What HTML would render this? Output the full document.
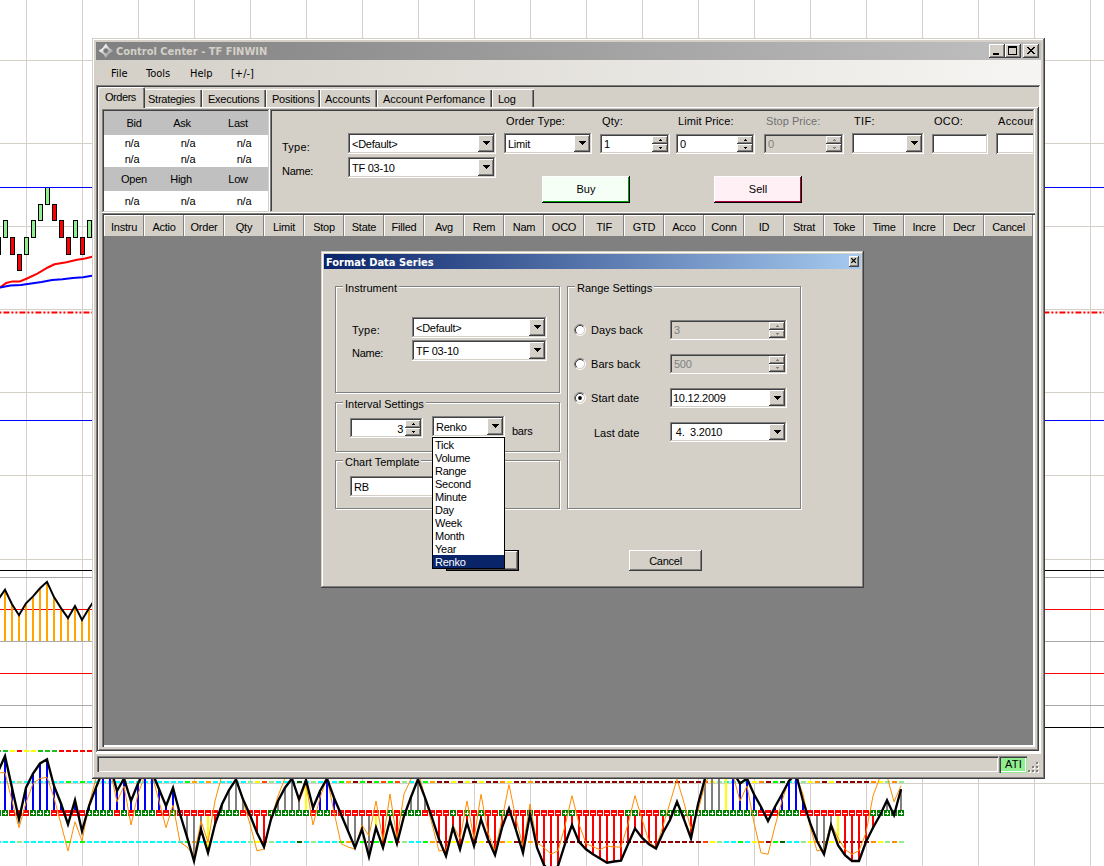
<!DOCTYPE html>
<html><head><meta charset="utf-8"><title>Control Center - TF FINWIN</title>
<style>
html,body{margin:0;padding:0}
body{width:1104px;height:866px;position:relative;overflow:hidden;background:#fff;font-family:"Liberation Sans",sans-serif;font-size:11px;color:#000}
div{position:absolute;box-sizing:border-box}
.t{white-space:nowrap;line-height:13px;height:13px;font-size:11px;letter-spacing:-0.25px}
.face{background:#d4d0c8}
.sunk{box-shadow:inset -1px -1px 0 #fff,inset 1px 1px 0 #808080,inset -2px -2px 0 #d4d0c8,inset 2px 2px 0 #404040}
.btn{background:#d4d0c8;box-shadow:inset -1px -1px 0 #404040,inset 1px 1px 0 #fff,inset -2px -2px 0 #808080,inset 2px 2px 0 #d4d0c8}
.win{background:#d4d0c8;box-shadow:inset -1px -1px 0 #404040,inset 1px 1px 0 #d4d0c8,inset -2px -2px 0 #808080,inset 2px 2px 0 #fff}
.arr{line-height:0}
.arr svg{display:block}
.hdr{letter-spacing:-0.25px;background:#d4d0c8;box-shadow:inset -1px -1px 0 #808080,inset 1px 1px 0 #fff;text-align:center;line-height:24px;font-size:11px;white-space:nowrap;overflow:hidden}
.menu{font-size:11px;line-height:15px;height:15px;white-space:nowrap;font-family:"DejaVu Sans Condensed","DejaVu Sans","Liberation Sans",sans-serif}
.tb{font-family:"DejaVu Sans Condensed","DejaVu Sans","Liberation Sans",sans-serif;font-weight:bold;letter-spacing:0}
.tab{background:#d4d0c8;white-space:nowrap;font-size:11px;line-height:13px}
.grp{border:1px solid #808080;box-shadow:1px 1px 0 #fff,inset 1px 1px 0 #fff}
.grp>.lg{background:#d4d0c8;padding:0 2px;line-height:13px;height:13px;white-space:nowrap;font-size:11px}
.radio{width:12px;height:12px;border-radius:50%;background:#fff;box-shadow:inset 1px 1px 0 #808080,inset -1px -1px 0 #fff}
</style></head><body>
<svg id="chart" width="1104" height="866" viewBox="0 0 1104 866" style="position:absolute;left:0;top:0">
<rect width="1104" height="866" fill="#fff"/>
<g shape-rendering="crispEdges">
<rect x="26" y="0" width="1" height="866" fill="#d4d0c8"/>
<rect x="82" y="0" width="1" height="866" fill="#d4d0c8"/>
<rect x="138" y="0" width="1" height="866" fill="#d4d0c8"/>
<rect x="194" y="0" width="1" height="866" fill="#d4d0c8"/>
<rect x="250" y="0" width="1" height="866" fill="#d4d0c8"/>
<rect x="306" y="0" width="1" height="866" fill="#d4d0c8"/>
<rect x="362" y="0" width="1" height="866" fill="#d4d0c8"/>
<rect x="418" y="0" width="1" height="866" fill="#d4d0c8"/>
<rect x="474" y="0" width="1" height="866" fill="#d4d0c8"/>
<rect x="530" y="0" width="1" height="866" fill="#d4d0c8"/>
<rect x="586" y="0" width="1" height="866" fill="#d4d0c8"/>
<rect x="642" y="0" width="1" height="866" fill="#d4d0c8"/>
<rect x="698" y="0" width="1" height="866" fill="#d4d0c8"/>
<rect x="754" y="0" width="1" height="866" fill="#d4d0c8"/>
<rect x="810" y="0" width="1" height="866" fill="#d4d0c8"/>
<rect x="866" y="0" width="1" height="866" fill="#d4d0c8"/>
<rect x="922" y="0" width="1" height="866" fill="#d4d0c8"/>
<rect x="978" y="0" width="1" height="866" fill="#d4d0c8"/>
<rect x="1034" y="0" width="1" height="866" fill="#d4d0c8"/>
<rect x="1090" y="0" width="1" height="866" fill="#d4d0c8"/>
<rect x="0" y="60" width="1104" height="1" fill="#d4d0c8"/>
<rect x="0" y="143" width="1104" height="1" fill="#d4d0c8"/>
<rect x="0" y="226" width="1104" height="1" fill="#d4d0c8"/>
<rect x="0" y="309" width="1104" height="1" fill="#d4d0c8"/>
<rect x="0" y="392" width="1104" height="1" fill="#d4d0c8"/>
<rect x="0" y="475" width="1104" height="1" fill="#d4d0c8"/>
<rect x="0" y="559" width="1104" height="1" fill="#d4d0c8"/>
<rect x="0" y="783" width="1104" height="1" fill="#d4d0c8"/>
<rect x="0" y="577" width="1104" height="1" fill="#a9a9a9"/>
<rect x="0" y="641" width="1104" height="1" fill="#a9a9a9"/>
<rect x="0" y="705" width="1104" height="1" fill="#a9a9a9"/>
<rect x="0" y="187" width="1104" height="1" fill="#0000ff"/>
<rect x="0" y="420" width="1104" height="1" fill="#0000ff"/>
<rect x="0" y="570" width="1104" height="1" fill="#000"/>
<rect x="0" y="727" width="1104" height="1" fill="#000"/>
<rect x="0" y="609" width="1104" height="1" fill="#ff0000"/>
<rect x="0" y="673" width="1104" height="1" fill="#ff0000"/>
</g><line x1="-12.6" y1="312.5" x2="1104" y2="312.5" stroke="#ff0000" stroke-width="2" stroke-dasharray="6 2 2 2 2 2"/><g shape-rendering="crispEdges">
</g>
<rect x="-3.5" y="237.5" width="4" height="17" fill="#ff0000" stroke="#000" stroke-width="1"/>
<rect x="3.5" y="220.5" width="4" height="17" fill="#90ee90" stroke="#000" stroke-width="1"/>
<rect x="10.5" y="237.5" width="4" height="17" fill="#ff0000" stroke="#000" stroke-width="1"/>
<rect x="17.5" y="254.5" width="4" height="16" fill="#ff0000" stroke="#000" stroke-width="1"/>
<rect x="24.5" y="237.5" width="4" height="17" fill="#90ee90" stroke="#000" stroke-width="1"/>
<rect x="31.5" y="220.5" width="4" height="17" fill="#90ee90" stroke="#000" stroke-width="1"/>
<rect x="38.5" y="204.5" width="4" height="16" fill="#90ee90" stroke="#000" stroke-width="1"/>
<rect x="45.5" y="187.5" width="4" height="17" fill="#90ee90" stroke="#000" stroke-width="1"/>
<rect x="52.5" y="204.5" width="4" height="16" fill="#ff0000" stroke="#000" stroke-width="1"/>
<rect x="59.5" y="220.5" width="4" height="17" fill="#ff0000" stroke="#000" stroke-width="1"/>
<rect x="66.5" y="237.5" width="4" height="17" fill="#ff0000" stroke="#000" stroke-width="1"/>
<rect x="73.5" y="220.5" width="4" height="17" fill="#90ee90" stroke="#000" stroke-width="1"/>
<rect x="80.5" y="237.5" width="4" height="17" fill="#ff0000" stroke="#000" stroke-width="1"/>
<rect x="87.5" y="220.5" width="4" height="17" fill="#90ee90" stroke="#000" stroke-width="1"/>
<rect x="0" y="187" width="1104" height="1" fill="#0000ff" shape-rendering="crispEdges"/>
<polyline fill="none" stroke="#ff0000" stroke-width="2" points="0,287.6 6.2,283 12.5,281.4 19.8,281.4 27,278.5 37.4,273.7 47.8,267.5 54.5,264.3 66.5,262.3 77,259.8 85.2,258.5 92,256.7 96,256"/>
<polyline fill="none" stroke="#0000ff" stroke-width="2" points="0,287.6 10.4,285.5 20.8,285 31.2,283.5 41.6,282 52,280 62.4,279.3 72.8,277.9 83,277.2 92,275.8 96,275.4"/>
<g shape-rendering="crispEdges">
<rect x="-3" y="600.0" width="2" height="41.0" fill="#ffa500"/>
<rect x="4" y="589.8" width="2" height="51.2" fill="#ffa500"/>
<rect x="11" y="604.3" width="2" height="36.7" fill="#ffa500"/>
<rect x="18" y="615.2" width="2" height="25.8" fill="#ffa500"/>
<rect x="25" y="603.3" width="2" height="37.7" fill="#ffa500"/>
<rect x="32" y="596.4" width="2" height="44.6" fill="#ffa500"/>
<rect x="39" y="588.3" width="2" height="52.7" fill="#ffa500"/>
<rect x="46" y="581.8" width="2" height="59.2" fill="#ffa500"/>
<rect x="53" y="597.1" width="2" height="43.9" fill="#ffa500"/>
<rect x="60" y="608.1" width="2" height="32.9" fill="#ffa500"/>
<rect x="67" y="618.1" width="2" height="22.9" fill="#ffa500"/>
<rect x="74" y="606.0" width="2" height="35.0" fill="#ffa500"/>
<rect x="81" y="619.9" width="2" height="21.1" fill="#ffa500"/>
<rect x="88" y="608.3" width="2" height="32.7" fill="#ffa500"/>
<rect x="95" y="598.0" width="2" height="43.0" fill="#ffa500"/>
</g>
<polyline fill="none" stroke="#000" stroke-width="2" stroke-linejoin="miter" stroke-miterlimit="12" points="-2,600 5,589.8 12,604.3 19,615.2 26,603.3 33,596.4 40,588.3 47,581.8 54,597.1 61,608.1 68,618.1 75,606 82,619.9 89,608.3 96,598"/>
<g shape-rendering="crispEdges">
<rect x="0" y="750" width="1" height="2" fill="#1ebe1e"/>
<rect x="3" y="750" width="5" height="2" fill="#1ebe1e"/>
<rect x="10" y="750" width="5" height="2" fill="#ffff00"/>
<rect x="17" y="750" width="5" height="2" fill="#ff0000"/>
<rect x="24" y="750" width="5" height="2" fill="#ffff00"/>
<rect x="31" y="750" width="5" height="2" fill="#ffff00"/>
<rect x="38" y="750" width="5" height="2" fill="#1ebe1e"/>
<rect x="45" y="750" width="5" height="2" fill="#1ebe1e"/>
<rect x="52" y="750" width="5" height="2" fill="#1ebe1e"/>
<rect x="59" y="750" width="5" height="2" fill="#ff0000"/>
<rect x="66" y="750" width="5" height="2" fill="#ff0000"/>
<rect x="73" y="750" width="5" height="2" fill="#ff0000"/>
<rect x="80" y="750" width="5" height="2" fill="#ff0000"/>
<rect x="87" y="750" width="5" height="2" fill="#ff0000"/>
<rect x="-4" y="781" width="5" height="2" fill="#00ffff"/>
<rect x="-4" y="841" width="5" height="2" fill="#00ffff"/>
<rect x="3" y="781" width="5" height="2" fill="#00ffff"/>
<rect x="3" y="841" width="5" height="2" fill="#00ffff"/>
<rect x="10" y="781" width="5" height="2" fill="#00ffff"/>
<rect x="10" y="841" width="5" height="2" fill="#00ffff"/>
<rect x="17" y="781" width="5" height="2" fill="#90ee90"/>
<rect x="17" y="841" width="5" height="2" fill="#90ee90"/>
<rect x="24" y="781" width="5" height="2" fill="#00ffff"/>
<rect x="24" y="841" width="5" height="2" fill="#00ffff"/>
<rect x="31" y="781" width="5" height="2" fill="#00ffff"/>
<rect x="31" y="841" width="5" height="2" fill="#00ffff"/>
<rect x="38" y="781" width="5" height="2" fill="#00ffff"/>
<rect x="38" y="841" width="5" height="2" fill="#00ffff"/>
<rect x="45" y="781" width="5" height="2" fill="#00ffff"/>
<rect x="45" y="841" width="5" height="2" fill="#00ffff"/>
<rect x="52" y="781" width="5" height="2" fill="#00ffff"/>
<rect x="52" y="841" width="5" height="2" fill="#00ffff"/>
<rect x="59" y="781" width="5" height="2" fill="#00ffff"/>
<rect x="59" y="841" width="5" height="2" fill="#00ffff"/>
<rect x="66" y="781" width="5" height="2" fill="#00ff00"/>
<rect x="66" y="841" width="5" height="2" fill="#00ff00"/>
<rect x="73" y="781" width="5" height="2" fill="#00ffff"/>
<rect x="73" y="841" width="5" height="2" fill="#00ffff"/>
<rect x="80" y="781" width="5" height="2" fill="#00ff00"/>
<rect x="80" y="841" width="5" height="2" fill="#00ff00"/>
<rect x="87" y="781" width="5" height="2" fill="#00ffff"/>
<rect x="87" y="841" width="5" height="2" fill="#00ffff"/>
<rect x="94" y="781" width="5" height="2" fill="#00ffff"/>
<rect x="94" y="841" width="5" height="2" fill="#00ffff"/>
<rect x="101" y="781" width="5" height="2" fill="#00ffff"/>
<rect x="101" y="841" width="5" height="2" fill="#00ffff"/>
<rect x="108" y="781" width="5" height="2" fill="#00ffff"/>
<rect x="108" y="841" width="5" height="2" fill="#00ffff"/>
<rect x="115" y="781" width="5" height="2" fill="#00ffff"/>
<rect x="115" y="841" width="5" height="2" fill="#00ffff"/>
<rect x="122" y="781" width="5" height="2" fill="#00ffff"/>
<rect x="122" y="841" width="5" height="2" fill="#00ffff"/>
<rect x="129" y="781" width="5" height="2" fill="#00ffff"/>
<rect x="129" y="841" width="5" height="2" fill="#00ffff"/>
<rect x="136" y="781" width="5" height="2" fill="#00ffff"/>
<rect x="136" y="841" width="5" height="2" fill="#00ffff"/>
<rect x="143" y="781" width="5" height="2" fill="#00ffff"/>
<rect x="143" y="841" width="5" height="2" fill="#00ffff"/>
<rect x="150" y="781" width="5" height="2" fill="#00ffff"/>
<rect x="150" y="841" width="5" height="2" fill="#00ffff"/>
<rect x="157" y="781" width="5" height="2" fill="#00ffff"/>
<rect x="157" y="841" width="5" height="2" fill="#00ffff"/>
<rect x="164" y="781" width="5" height="2" fill="#00ffff"/>
<rect x="164" y="841" width="5" height="2" fill="#00ffff"/>
<rect x="171" y="781" width="5" height="2" fill="#00ffff"/>
<rect x="171" y="841" width="5" height="2" fill="#00ffff"/>
<rect x="178" y="781" width="5" height="2" fill="#00ffff"/>
<rect x="178" y="841" width="5" height="2" fill="#00ffff"/>
<rect x="185" y="781" width="5" height="2" fill="#00ff00"/>
<rect x="185" y="841" width="5" height="2" fill="#00ff00"/>
<rect x="192" y="781" width="5" height="2" fill="#ffa500"/>
<rect x="192" y="841" width="5" height="2" fill="#ffa500"/>
<rect x="199" y="781" width="5" height="2" fill="#00ffff"/>
<rect x="199" y="841" width="5" height="2" fill="#00ffff"/>
<rect x="206" y="781" width="5" height="2" fill="#ffa500"/>
<rect x="206" y="841" width="5" height="2" fill="#ffa500"/>
<rect x="213" y="781" width="5" height="2" fill="#00ffff"/>
<rect x="213" y="841" width="5" height="2" fill="#00ffff"/>
<rect x="220" y="781" width="5" height="2" fill="#00ffff"/>
<rect x="220" y="841" width="5" height="2" fill="#00ffff"/>
<rect x="227" y="781" width="5" height="2" fill="#00ffff"/>
<rect x="227" y="841" width="5" height="2" fill="#00ffff"/>
<rect x="234" y="781" width="5" height="2" fill="#00ffff"/>
<rect x="234" y="841" width="5" height="2" fill="#00ffff"/>
<rect x="241" y="781" width="5" height="2" fill="#00ffff"/>
<rect x="241" y="841" width="5" height="2" fill="#00ffff"/>
<rect x="248" y="781" width="5" height="2" fill="#90ee90"/>
<rect x="248" y="841" width="5" height="2" fill="#90ee90"/>
<rect x="255" y="781" width="5" height="2" fill="#ffff00"/>
<rect x="255" y="841" width="5" height="2" fill="#ffff00"/>
<rect x="262" y="781" width="5" height="2" fill="#ff4500"/>
<rect x="262" y="841" width="5" height="2" fill="#ff4500"/>
<rect x="269" y="781" width="5" height="2" fill="#90ee90"/>
<rect x="269" y="841" width="5" height="2" fill="#90ee90"/>
<rect x="276" y="781" width="5" height="2" fill="#00ffff"/>
<rect x="276" y="841" width="5" height="2" fill="#00ffff"/>
<rect x="283" y="781" width="5" height="2" fill="#00ffff"/>
<rect x="283" y="841" width="5" height="2" fill="#00ffff"/>
<rect x="290" y="781" width="5" height="2" fill="#00ffff"/>
<rect x="290" y="841" width="5" height="2" fill="#00ffff"/>
<rect x="297" y="781" width="5" height="2" fill="#006400"/>
<rect x="297" y="841" width="5" height="2" fill="#006400"/>
<rect x="304" y="781" width="5" height="2" fill="#00ffff"/>
<rect x="304" y="841" width="5" height="2" fill="#00ffff"/>
<rect x="311" y="781" width="5" height="2" fill="#90ee90"/>
<rect x="311" y="841" width="5" height="2" fill="#90ee90"/>
<rect x="318" y="781" width="5" height="2" fill="#00ffff"/>
<rect x="318" y="841" width="5" height="2" fill="#00ffff"/>
<rect x="325" y="781" width="5" height="2" fill="#00ffff"/>
<rect x="325" y="841" width="5" height="2" fill="#00ffff"/>
<rect x="332" y="781" width="5" height="2" fill="#00ffff"/>
<rect x="332" y="841" width="5" height="2" fill="#00ffff"/>
<rect x="339" y="781" width="5" height="2" fill="#00ff00"/>
<rect x="339" y="841" width="5" height="2" fill="#00ff00"/>
<rect x="346" y="781" width="5" height="2" fill="#ffa500"/>
<rect x="346" y="841" width="5" height="2" fill="#ffa500"/>
<rect x="353" y="781" width="5" height="2" fill="#8b0000"/>
<rect x="353" y="841" width="5" height="2" fill="#8b0000"/>
<rect x="360" y="781" width="5" height="2" fill="#00ff00"/>
<rect x="360" y="841" width="5" height="2" fill="#00ff00"/>
<rect x="367" y="781" width="5" height="2" fill="#8b0000"/>
<rect x="367" y="841" width="5" height="2" fill="#8b0000"/>
<rect x="374" y="781" width="5" height="2" fill="#00ff00"/>
<rect x="374" y="841" width="5" height="2" fill="#00ff00"/>
<rect x="381" y="781" width="5" height="2" fill="#ff4500"/>
<rect x="381" y="841" width="5" height="2" fill="#ff4500"/>
<rect x="388" y="781" width="5" height="2" fill="#00ff00"/>
<rect x="388" y="841" width="5" height="2" fill="#00ff00"/>
<rect x="395" y="781" width="5" height="2" fill="#ff4500"/>
<rect x="395" y="841" width="5" height="2" fill="#ff4500"/>
<rect x="402" y="781" width="5" height="2" fill="#90ee90"/>
<rect x="402" y="841" width="5" height="2" fill="#90ee90"/>
<rect x="409" y="781" width="5" height="2" fill="#00ffff"/>
<rect x="409" y="841" width="5" height="2" fill="#00ffff"/>
<rect x="416" y="781" width="5" height="2" fill="#00ffff"/>
<rect x="416" y="841" width="5" height="2" fill="#00ffff"/>
<rect x="423" y="781" width="5" height="2" fill="#00ff00"/>
<rect x="423" y="841" width="5" height="2" fill="#00ff00"/>
<rect x="430" y="781" width="5" height="2" fill="#ffa500"/>
<rect x="430" y="841" width="5" height="2" fill="#ffa500"/>
<rect x="437" y="781" width="5" height="2" fill="#8b0000"/>
<rect x="437" y="841" width="5" height="2" fill="#8b0000"/>
<rect x="444" y="781" width="5" height="2" fill="#8b0000"/>
<rect x="444" y="841" width="5" height="2" fill="#8b0000"/>
<rect x="451" y="781" width="5" height="2" fill="#ffff00"/>
<rect x="451" y="841" width="5" height="2" fill="#ffff00"/>
<rect x="458" y="781" width="5" height="2" fill="#8b0000"/>
<rect x="458" y="841" width="5" height="2" fill="#8b0000"/>
<rect x="465" y="781" width="5" height="2" fill="#ffff00"/>
<rect x="465" y="841" width="5" height="2" fill="#ffff00"/>
<rect x="472" y="781" width="5" height="2" fill="#8b0000"/>
<rect x="472" y="841" width="5" height="2" fill="#8b0000"/>
<rect x="479" y="781" width="5" height="2" fill="#ffff00"/>
<rect x="479" y="841" width="5" height="2" fill="#ffff00"/>
<rect x="486" y="781" width="5" height="2" fill="#8b0000"/>
<rect x="486" y="841" width="5" height="2" fill="#8b0000"/>
<rect x="493" y="781" width="5" height="2" fill="#8b0000"/>
<rect x="493" y="841" width="5" height="2" fill="#8b0000"/>
<rect x="500" y="781" width="5" height="2" fill="#ff8c00"/>
<rect x="500" y="841" width="5" height="2" fill="#ff8c00"/>
<rect x="507" y="781" width="5" height="2" fill="#ffff00"/>
<rect x="507" y="841" width="5" height="2" fill="#ffff00"/>
<rect x="514" y="781" width="5" height="2" fill="#8b0000"/>
<rect x="514" y="841" width="5" height="2" fill="#8b0000"/>
<rect x="521" y="781" width="5" height="2" fill="#8b0000"/>
<rect x="521" y="841" width="5" height="2" fill="#8b0000"/>
<rect x="528" y="781" width="5" height="2" fill="#ffa500"/>
<rect x="528" y="841" width="5" height="2" fill="#ffa500"/>
<rect x="535" y="781" width="5" height="2" fill="#8b0000"/>
<rect x="535" y="841" width="5" height="2" fill="#8b0000"/>
<rect x="542" y="781" width="5" height="2" fill="#8b0000"/>
<rect x="542" y="841" width="5" height="2" fill="#8b0000"/>
<rect x="549" y="781" width="5" height="2" fill="#8b0000"/>
<rect x="549" y="841" width="5" height="2" fill="#8b0000"/>
<rect x="556" y="781" width="5" height="2" fill="#8b0000"/>
<rect x="556" y="841" width="5" height="2" fill="#8b0000"/>
<rect x="563" y="781" width="5" height="2" fill="#8b0000"/>
<rect x="563" y="841" width="5" height="2" fill="#8b0000"/>
<rect x="570" y="781" width="5" height="2" fill="#8b0000"/>
<rect x="570" y="841" width="5" height="2" fill="#8b0000"/>
<rect x="577" y="781" width="5" height="2" fill="#8b0000"/>
<rect x="577" y="841" width="5" height="2" fill="#8b0000"/>
<rect x="584" y="781" width="5" height="2" fill="#8b0000"/>
<rect x="584" y="841" width="5" height="2" fill="#8b0000"/>
<rect x="591" y="781" width="5" height="2" fill="#8b0000"/>
<rect x="591" y="841" width="5" height="2" fill="#8b0000"/>
<rect x="598" y="781" width="5" height="2" fill="#8b0000"/>
<rect x="598" y="841" width="5" height="2" fill="#8b0000"/>
<rect x="605" y="781" width="5" height="2" fill="#8b0000"/>
<rect x="605" y="841" width="5" height="2" fill="#8b0000"/>
<rect x="612" y="781" width="5" height="2" fill="#8b0000"/>
<rect x="612" y="841" width="5" height="2" fill="#8b0000"/>
<rect x="619" y="781" width="5" height="2" fill="#8b0000"/>
<rect x="619" y="841" width="5" height="2" fill="#8b0000"/>
<rect x="626" y="781" width="5" height="2" fill="#8b0000"/>
<rect x="626" y="841" width="5" height="2" fill="#8b0000"/>
<rect x="633" y="781" width="5" height="2" fill="#8b0000"/>
<rect x="633" y="841" width="5" height="2" fill="#8b0000"/>
<rect x="640" y="781" width="5" height="2" fill="#8b0000"/>
<rect x="640" y="841" width="5" height="2" fill="#8b0000"/>
<rect x="647" y="781" width="5" height="2" fill="#8b0000"/>
<rect x="647" y="841" width="5" height="2" fill="#8b0000"/>
<rect x="654" y="781" width="5" height="2" fill="#8b0000"/>
<rect x="654" y="841" width="5" height="2" fill="#8b0000"/>
<rect x="661" y="781" width="5" height="2" fill="#8b0000"/>
<rect x="661" y="841" width="5" height="2" fill="#8b0000"/>
<rect x="668" y="781" width="5" height="2" fill="#8b0000"/>
<rect x="668" y="841" width="5" height="2" fill="#8b0000"/>
<rect x="675" y="781" width="5" height="2" fill="#8b0000"/>
<rect x="675" y="841" width="5" height="2" fill="#8b0000"/>
<rect x="682" y="781" width="5" height="2" fill="#8b0000"/>
<rect x="682" y="841" width="5" height="2" fill="#8b0000"/>
<rect x="689" y="781" width="5" height="2" fill="#8b0000"/>
<rect x="689" y="841" width="5" height="2" fill="#8b0000"/>
<rect x="696" y="781" width="5" height="2" fill="#8b0000"/>
<rect x="696" y="841" width="5" height="2" fill="#8b0000"/>
<rect x="703" y="781" width="5" height="2" fill="#ff4500"/>
<rect x="703" y="841" width="5" height="2" fill="#ff4500"/>
<rect x="710" y="781" width="5" height="2" fill="#ffff00"/>
<rect x="710" y="841" width="5" height="2" fill="#ffff00"/>
<rect x="717" y="781" width="5" height="2" fill="#90ee90"/>
<rect x="717" y="841" width="5" height="2" fill="#90ee90"/>
<rect x="724" y="781" width="5" height="2" fill="#00ffff"/>
<rect x="724" y="841" width="5" height="2" fill="#00ffff"/>
<rect x="731" y="781" width="5" height="2" fill="#00ffff"/>
<rect x="731" y="841" width="5" height="2" fill="#00ffff"/>
<rect x="738" y="781" width="5" height="2" fill="#00ff00"/>
<rect x="738" y="841" width="5" height="2" fill="#00ff00"/>
<rect x="745" y="781" width="5" height="2" fill="#00ffff"/>
<rect x="745" y="841" width="5" height="2" fill="#00ffff"/>
<rect x="752" y="781" width="5" height="2" fill="#ffff00"/>
<rect x="752" y="841" width="5" height="2" fill="#ffff00"/>
<rect x="759" y="781" width="5" height="2" fill="#ff8c00"/>
<rect x="759" y="841" width="5" height="2" fill="#ff8c00"/>
<rect x="766" y="781" width="5" height="2" fill="#8b0000"/>
<rect x="766" y="841" width="5" height="2" fill="#8b0000"/>
<rect x="773" y="781" width="5" height="2" fill="#00ff00"/>
<rect x="773" y="841" width="5" height="2" fill="#00ff00"/>
<rect x="780" y="781" width="5" height="2" fill="#006400"/>
<rect x="780" y="841" width="5" height="2" fill="#006400"/>
<rect x="787" y="781" width="5" height="2" fill="#00ffff"/>
<rect x="787" y="841" width="5" height="2" fill="#00ffff"/>
<rect x="794" y="781" width="5" height="2" fill="#00ffff"/>
<rect x="794" y="841" width="5" height="2" fill="#00ffff"/>
<rect x="801" y="781" width="5" height="2" fill="#90ee90"/>
<rect x="801" y="841" width="5" height="2" fill="#90ee90"/>
<rect x="808" y="781" width="5" height="2" fill="#ffff00"/>
<rect x="808" y="841" width="5" height="2" fill="#ffff00"/>
<rect x="815" y="781" width="5" height="2" fill="#ff8c00"/>
<rect x="815" y="841" width="5" height="2" fill="#ff8c00"/>
<rect x="822" y="781" width="5" height="2" fill="#8b0000"/>
<rect x="822" y="841" width="5" height="2" fill="#8b0000"/>
<rect x="829" y="781" width="5" height="2" fill="#ffff00"/>
<rect x="829" y="841" width="5" height="2" fill="#ffff00"/>
<rect x="836" y="781" width="5" height="2" fill="#8b0000"/>
<rect x="836" y="841" width="5" height="2" fill="#8b0000"/>
<rect x="843" y="781" width="5" height="2" fill="#8b0000"/>
<rect x="843" y="841" width="5" height="2" fill="#8b0000"/>
<rect x="850" y="781" width="5" height="2" fill="#8b0000"/>
<rect x="850" y="841" width="5" height="2" fill="#8b0000"/>
<rect x="857" y="781" width="5" height="2" fill="#8b0000"/>
<rect x="857" y="841" width="5" height="2" fill="#8b0000"/>
<rect x="864" y="781" width="5" height="2" fill="#8b0000"/>
<rect x="864" y="841" width="5" height="2" fill="#8b0000"/>
<rect x="871" y="781" width="5" height="2" fill="#ff8c00"/>
<rect x="871" y="841" width="5" height="2" fill="#ff8c00"/>
<rect x="878" y="781" width="5" height="2" fill="#ffff00"/>
<rect x="878" y="841" width="5" height="2" fill="#ffff00"/>
<rect x="885" y="781" width="5" height="2" fill="#90ee90"/>
<rect x="885" y="841" width="5" height="2" fill="#90ee90"/>
<rect x="892" y="781" width="5" height="2" fill="#ff8c00"/>
<rect x="892" y="841" width="5" height="2" fill="#ff8c00"/>
<rect x="899" y="781" width="5" height="2" fill="#90ee90"/>
<rect x="899" y="841" width="5" height="2" fill="#90ee90"/>
<rect x="-3" y="772.0" width="2" height="41.0" fill="#0000ff"/>
<rect x="4" y="756.0" width="2" height="57.0" fill="#0000ff"/>
<rect x="11" y="787.7" width="2" height="25.3" fill="#0000ff"/>
<rect x="25" y="787.7" width="2" height="25.3" fill="#0000ff"/>
<rect x="32" y="773.5" width="2" height="39.5" fill="#0000ff"/>
<rect x="39" y="763.5" width="2" height="49.5" fill="#0000ff"/>
<rect x="46" y="759.3" width="2" height="53.7" fill="#0000ff"/>
<rect x="53" y="786.0" width="2" height="27.0" fill="#0000ff"/>
<rect x="60" y="803.5" width="2" height="9.5" fill="#0000ff"/>
<rect x="74" y="800.2" width="2" height="12.8" fill="#0000ff"/>
<rect x="88" y="806.0" width="2" height="7.0" fill="#0000ff"/>
<rect x="95" y="787.7" width="2" height="25.3" fill="#0000ff"/>
<rect x="102" y="770.0" width="2" height="43.0" fill="#0000ff"/>
<rect x="109" y="765.0" width="2" height="48.0" fill="#0000ff"/>
<rect x="116" y="791.0" width="2" height="22.0" fill="#0000ff"/>
<rect x="123" y="778.5" width="2" height="34.5" fill="#0000ff"/>
<rect x="130" y="801.0" width="2" height="12.0" fill="#0000ff"/>
<rect x="137" y="783.5" width="2" height="29.5" fill="#0000ff"/>
<rect x="144" y="770.0" width="2" height="43.0" fill="#0000ff"/>
<rect x="151" y="772.0" width="2" height="41.0" fill="#0000ff"/>
<rect x="158" y="789.0" width="2" height="24.0" fill="#0000ff"/>
<rect x="165" y="806.0" width="2" height="7.0" fill="#0000ff"/>
<rect x="172" y="787.7" width="2" height="25.3" fill="#0000ff"/>
<rect x="186" y="813.0" width="2" height="23.8" fill="#808080"/>
<rect x="193" y="813.0" width="2" height="48.0" fill="#808080"/>
<rect x="200" y="813.0" width="2" height="16.3" fill="#808080"/>
<rect x="207" y="813.0" width="2" height="39.7" fill="#ffff00"/>
<rect x="214" y="813.0" width="2" height="11.3" fill="#ff0000"/>
<rect x="221" y="804.3" width="2" height="8.7" fill="#808080"/>
<rect x="228" y="790.0" width="2" height="23.0" fill="#808080"/>
<rect x="235" y="779.3" width="2" height="33.7" fill="#808080"/>
<rect x="242" y="799.3" width="2" height="13.7" fill="#808080"/>
<rect x="256" y="813.0" width="2" height="19.7" fill="#ff0000"/>
<rect x="263" y="813.0" width="2" height="33.8" fill="#ff0000"/>
<rect x="270" y="813.0" width="2" height="6.3" fill="#ff0000"/>
<rect x="277" y="801.0" width="2" height="12.0" fill="#808080"/>
<rect x="284" y="787.7" width="2" height="25.3" fill="#808080"/>
<rect x="291" y="778.5" width="2" height="34.5" fill="#808080"/>
<rect x="298" y="799.3" width="2" height="13.7" fill="#808080"/>
<rect x="305" y="780.0" width="2" height="33.0" fill="#ffff00"/>
<rect x="312" y="807.7" width="2" height="5.3" fill="#0000ff"/>
<rect x="319" y="791.0" width="2" height="22.0" fill="#0000ff"/>
<rect x="326" y="778.5" width="2" height="34.5" fill="#0000ff"/>
<rect x="333" y="797.7" width="2" height="15.3" fill="#0000ff"/>
<rect x="347" y="813.0" width="2" height="18.0" fill="#808080"/>
<rect x="354" y="813.0" width="2" height="34.7" fill="#808080"/>
<rect x="361" y="813.0" width="2" height="16.3" fill="#808080"/>
<rect x="368" y="813.0" width="2" height="43.8" fill="#808080"/>
<rect x="375" y="813.0" width="2" height="14.7" fill="#ffff00"/>
<rect x="382" y="813.0" width="2" height="34.7" fill="#ff0000"/>
<rect x="389" y="813.0" width="2" height="7.0" fill="#ff0000"/>
<rect x="396" y="813.0" width="2" height="30.5" fill="#ff0000"/>
<rect x="410" y="797.0" width="2" height="16.0" fill="#808080"/>
<rect x="417" y="779.3" width="2" height="33.7" fill="#808080"/>
<rect x="424" y="797.7" width="2" height="15.3" fill="#808080"/>
<rect x="438" y="813.0" width="2" height="26.3" fill="#ff0000"/>
<rect x="445" y="813.0" width="2" height="43.0" fill="#ff0000"/>
<rect x="452" y="813.0" width="2" height="14.7" fill="#ff0000"/>
<rect x="459" y="813.0" width="2" height="36.3" fill="#ff0000"/>
<rect x="466" y="813.0" width="2" height="9.7" fill="#ff0000"/>
<rect x="473" y="813.0" width="2" height="33.0" fill="#ff0000"/>
<rect x="480" y="813.0" width="2" height="6.3" fill="#ff0000"/>
<rect x="487" y="813.0" width="2" height="26.3" fill="#ff0000"/>
<rect x="494" y="813.0" width="2" height="42.0" fill="#ff0000"/>
<rect x="501" y="813.0" width="2" height="14.7" fill="#ff0000"/>
<rect x="508" y="808.5" width="2" height="4.5" fill="#ff0000"/>
<rect x="515" y="813.0" width="2" height="17.0" fill="#ff0000"/>
<rect x="522" y="813.0" width="2" height="39.7" fill="#ff0000"/>
<rect x="529" y="813.0" width="2" height="1.3" fill="#ff0000"/>
<rect x="536" y="813.0" width="2" height="34.7" fill="#ff0000"/>
<rect x="543" y="813.0" width="2" height="52.0" fill="#ff0000"/>
<rect x="550" y="813.0" width="2" height="59.0" fill="#ff0000"/>
<rect x="557" y="813.0" width="2" height="53.0" fill="#ff0000"/>
<rect x="564" y="813.0" width="2" height="31.0" fill="#ff0000"/>
<rect x="571" y="813.0" width="2" height="12.0" fill="#ff0000"/>
<rect x="578" y="813.0" width="2" height="28.8" fill="#ff0000"/>
<rect x="585" y="813.0" width="2" height="36.3" fill="#ff0000"/>
<rect x="592" y="813.0" width="2" height="41.3" fill="#ff0000"/>
<rect x="599" y="813.0" width="2" height="45.5" fill="#ff0000"/>
<rect x="606" y="813.0" width="2" height="49.7" fill="#ff0000"/>
<rect x="613" y="813.0" width="2" height="48.5" fill="#ff0000"/>
<rect x="620" y="813.0" width="2" height="47.7" fill="#ff0000"/>
<rect x="627" y="813.0" width="2" height="31.3" fill="#ff0000"/>
<rect x="634" y="813.0" width="2" height="15.5" fill="#ff0000"/>
<rect x="641" y="813.0" width="2" height="24.7" fill="#ff0000"/>
<rect x="648" y="813.0" width="2" height="31.3" fill="#ff0000"/>
<rect x="655" y="813.0" width="2" height="35.5" fill="#ff0000"/>
<rect x="662" y="813.0" width="2" height="19.7" fill="#ff0000"/>
<rect x="669" y="813.0" width="2" height="7.0" fill="#ff0000"/>
<rect x="683" y="813.0" width="2" height="6.3" fill="#ff0000"/>
<rect x="690" y="813.0" width="2" height="25.5" fill="#ff0000"/>
<rect x="704" y="778.5" width="2" height="34.5" fill="#808080"/>
<rect x="711" y="765.0" width="2" height="48.0" fill="#808080"/>
<rect x="718" y="770.0" width="2" height="43.0" fill="#808080"/>
<rect x="725" y="775.0" width="2" height="38.0" fill="#ffff00"/>
<rect x="732" y="772.0" width="2" height="41.0" fill="#0000ff"/>
<rect x="739" y="783.5" width="2" height="29.5" fill="#0000ff"/>
<rect x="746" y="778.5" width="2" height="34.5" fill="#0000ff"/>
<rect x="753" y="794.3" width="2" height="18.7" fill="#0000ff"/>
<rect x="760" y="806.8" width="2" height="6.2" fill="#0000ff"/>
<rect x="774" y="806.8" width="2" height="6.2" fill="#0000ff"/>
<rect x="781" y="794.3" width="2" height="18.7" fill="#0000ff"/>
<rect x="788" y="781.0" width="2" height="32.0" fill="#0000ff"/>
<rect x="795" y="774.0" width="2" height="39.0" fill="#0000ff"/>
<rect x="802" y="801.0" width="2" height="12.0" fill="#0000ff"/>
<rect x="816" y="813.0" width="2" height="28.0" fill="#808080"/>
<rect x="823" y="813.0" width="2" height="41.3" fill="#808080"/>
<rect x="830" y="813.0" width="2" height="12.2" fill="#808080"/>
<rect x="837" y="813.0" width="2" height="32.2" fill="#ffff00"/>
<rect x="844" y="813.0" width="2" height="42.2" fill="#ff0000"/>
<rect x="851" y="813.0" width="2" height="48.0" fill="#ff0000"/>
<rect x="858" y="813.0" width="2" height="48.0" fill="#ff0000"/>
<rect x="865" y="813.0" width="2" height="28.8" fill="#ff0000"/>
<rect x="872" y="813.0" width="2" height="14.7" fill="#ff0000"/>
<rect x="886" y="800.2" width="2" height="12.8" fill="#808080"/>
<rect x="900" y="789.3" width="2" height="23.7" fill="#808080"/>
<rect x="-5" y="810" width="6" height="6" fill="#008000"/>
<rect x="2" y="810" width="6" height="6" fill="#008000"/>
<rect x="9" y="810" width="6" height="6" fill="#ff0000"/>
<rect x="16" y="810" width="6" height="6" fill="#ff0000"/>
<rect x="23" y="810" width="6" height="6" fill="#ff0000"/>
<rect x="30" y="810" width="6" height="6" fill="#008000"/>
<rect x="37" y="810" width="6" height="6" fill="#008000"/>
<rect x="44" y="810" width="6" height="6" fill="#008000"/>
<rect x="51" y="810" width="6" height="6" fill="#ff0000"/>
<rect x="58" y="810" width="6" height="6" fill="#ff0000"/>
<rect x="65" y="810" width="6" height="6" fill="#ff0000"/>
<rect x="72" y="810" width="6" height="6" fill="#ff0000"/>
<rect x="79" y="810" width="6" height="6" fill="#ff0000"/>
<rect x="86" y="810" width="6" height="6" fill="#008000"/>
<rect x="93" y="810" width="6" height="6" fill="#008000"/>
<rect x="100" y="810" width="6" height="6" fill="#008000"/>
<rect x="107" y="810" width="6" height="6" fill="#008000"/>
<rect x="114" y="810" width="6" height="6" fill="#ff0000"/>
<rect x="121" y="810" width="6" height="6" fill="#008000"/>
<rect x="128" y="810" width="6" height="6" fill="#ff0000"/>
<rect x="135" y="810" width="6" height="6" fill="#008000"/>
<rect x="142" y="810" width="6" height="6" fill="#008000"/>
<rect x="149" y="810" width="6" height="6" fill="#008000"/>
<rect x="156" y="810" width="6" height="6" fill="#ff0000"/>
<rect x="163" y="810" width="6" height="6" fill="#ff0000"/>
<rect x="170" y="810" width="6" height="6" fill="#008000"/>
<rect x="177" y="810" width="6" height="6" fill="#ff0000"/>
<rect x="184" y="810" width="6" height="6" fill="#ff0000"/>
<rect x="191" y="810" width="6" height="6" fill="#ff0000"/>
<rect x="198" y="810" width="6" height="6" fill="#ff0000"/>
<rect x="205" y="810" width="6" height="6" fill="#ff0000"/>
<rect x="212" y="810" width="6" height="6" fill="#ff0000"/>
<rect x="219" y="810" width="6" height="6" fill="#008000"/>
<rect x="226" y="810" width="6" height="6" fill="#008000"/>
<rect x="233" y="810" width="6" height="6" fill="#008000"/>
<rect x="240" y="810" width="6" height="6" fill="#ff0000"/>
<rect x="247" y="810" width="6" height="6" fill="#ff0000"/>
<rect x="254" y="810" width="6" height="6" fill="#ff0000"/>
<rect x="261" y="810" width="6" height="6" fill="#ff0000"/>
<rect x="268" y="810" width="6" height="6" fill="#008000"/>
<rect x="275" y="810" width="6" height="6" fill="#008000"/>
<rect x="282" y="810" width="6" height="6" fill="#008000"/>
<rect x="289" y="810" width="6" height="6" fill="#008000"/>
<rect x="296" y="810" width="6" height="6" fill="#008000"/>
<rect x="303" y="810" width="6" height="6" fill="#008000"/>
<rect x="310" y="810" width="6" height="6" fill="#ff0000"/>
<rect x="317" y="810" width="6" height="6" fill="#008000"/>
<rect x="324" y="810" width="6" height="6" fill="#008000"/>
<rect x="331" y="810" width="6" height="6" fill="#ff0000"/>
<rect x="338" y="810" width="6" height="6" fill="#ff0000"/>
<rect x="345" y="810" width="6" height="6" fill="#ff0000"/>
<rect x="352" y="810" width="6" height="6" fill="#ff0000"/>
<rect x="359" y="810" width="6" height="6" fill="#ff0000"/>
<rect x="366" y="810" width="6" height="6" fill="#ff0000"/>
<rect x="373" y="810" width="6" height="6" fill="#ff0000"/>
<rect x="380" y="810" width="6" height="6" fill="#ff0000"/>
<rect x="387" y="810" width="6" height="6" fill="#008000"/>
<rect x="394" y="810" width="6" height="6" fill="#ff0000"/>
<rect x="401" y="810" width="6" height="6" fill="#008000"/>
<rect x="408" y="810" width="6" height="6" fill="#008000"/>
<rect x="415" y="810" width="6" height="6" fill="#008000"/>
<rect x="422" y="810" width="6" height="6" fill="#ff0000"/>
<rect x="429" y="810" width="6" height="6" fill="#ff0000"/>
<rect x="436" y="810" width="6" height="6" fill="#ff0000"/>
<rect x="443" y="810" width="6" height="6" fill="#ff0000"/>
<rect x="450" y="810" width="6" height="6" fill="#008000"/>
<rect x="457" y="810" width="6" height="6" fill="#ff0000"/>
<rect x="464" y="810" width="6" height="6" fill="#008000"/>
<rect x="471" y="810" width="6" height="6" fill="#ff0000"/>
<rect x="478" y="810" width="6" height="6" fill="#008000"/>
<rect x="485" y="810" width="6" height="6" fill="#ff0000"/>
<rect x="492" y="810" width="6" height="6" fill="#ff0000"/>
<rect x="499" y="810" width="6" height="6" fill="#008000"/>
<rect x="506" y="810" width="6" height="6" fill="#ff0000"/>
<rect x="513" y="810" width="6" height="6" fill="#ff0000"/>
<rect x="520" y="810" width="6" height="6" fill="#ff0000"/>
<rect x="527" y="810" width="6" height="6" fill="#008000"/>
<rect x="534" y="810" width="6" height="6" fill="#ff0000"/>
<rect x="541" y="810" width="6" height="6" fill="#ff0000"/>
<rect x="548" y="810" width="6" height="6" fill="#ff0000"/>
<rect x="555" y="810" width="6" height="6" fill="#ff0000"/>
<rect x="562" y="810" width="6" height="6" fill="#008000"/>
<rect x="569" y="810" width="6" height="6" fill="#008000"/>
<rect x="576" y="810" width="6" height="6" fill="#ff0000"/>
<rect x="583" y="810" width="6" height="6" fill="#ff0000"/>
<rect x="590" y="810" width="6" height="6" fill="#ff0000"/>
<rect x="597" y="810" width="6" height="6" fill="#ff0000"/>
<rect x="604" y="810" width="6" height="6" fill="#ff0000"/>
<rect x="611" y="810" width="6" height="6" fill="#ff0000"/>
<rect x="618" y="810" width="6" height="6" fill="#ff0000"/>
<rect x="625" y="810" width="6" height="6" fill="#008000"/>
<rect x="632" y="810" width="6" height="6" fill="#008000"/>
<rect x="639" y="810" width="6" height="6" fill="#ff0000"/>
<rect x="646" y="810" width="6" height="6" fill="#ff0000"/>
<rect x="653" y="810" width="6" height="6" fill="#ff0000"/>
<rect x="660" y="810" width="6" height="6" fill="#008000"/>
<rect x="667" y="810" width="6" height="6" fill="#008000"/>
<rect x="674" y="810" width="6" height="6" fill="#008000"/>
<rect x="681" y="810" width="6" height="6" fill="#008000"/>
<rect x="688" y="810" width="6" height="6" fill="#008000"/>
<rect x="695" y="810" width="6" height="6" fill="#008000"/>
<rect x="702" y="810" width="6" height="6" fill="#008000"/>
<rect x="709" y="810" width="6" height="6" fill="#008000"/>
<rect x="716" y="810" width="6" height="6" fill="#008000"/>
<rect x="723" y="810" width="6" height="6" fill="#008000"/>
<rect x="730" y="810" width="6" height="6" fill="#008000"/>
<rect x="737" y="810" width="6" height="6" fill="#008000"/>
<rect x="744" y="810" width="6" height="6" fill="#008000"/>
<rect x="751" y="810" width="6" height="6" fill="#008000"/>
<rect x="758" y="810" width="6" height="6" fill="#ff0000"/>
<rect x="765" y="810" width="6" height="6" fill="#ff0000"/>
<rect x="772" y="810" width="6" height="6" fill="#ff0000"/>
<rect x="779" y="810" width="6" height="6" fill="#008000"/>
<rect x="786" y="810" width="6" height="6" fill="#008000"/>
<rect x="793" y="810" width="6" height="6" fill="#008000"/>
<rect x="800" y="810" width="6" height="6" fill="#ff0000"/>
<rect x="807" y="810" width="6" height="6" fill="#ff0000"/>
<rect x="814" y="810" width="6" height="6" fill="#ff0000"/>
<rect x="821" y="810" width="6" height="6" fill="#ff0000"/>
<rect x="828" y="810" width="6" height="6" fill="#ff0000"/>
<rect x="835" y="810" width="6" height="6" fill="#ff0000"/>
<rect x="842" y="810" width="6" height="6" fill="#ff0000"/>
<rect x="849" y="810" width="6" height="6" fill="#ff0000"/>
<rect x="856" y="810" width="6" height="6" fill="#ff0000"/>
<rect x="863" y="810" width="6" height="6" fill="#ff0000"/>
<rect x="870" y="810" width="6" height="6" fill="#008000"/>
<rect x="877" y="810" width="6" height="6" fill="#008000"/>
<rect x="884" y="810" width="6" height="6" fill="#008000"/>
<rect x="891" y="810" width="6" height="6" fill="#008000"/>
<rect x="898" y="810" width="6" height="6" fill="#008000"/>
</g>
<g fill="#fff" shape-rendering="crispEdges"><rect x="-4" y="813" width="4" height="1"/><rect x="-2" y="811" width="1" height="4"/><rect x="3" y="813" width="4" height="1"/><rect x="5" y="811" width="1" height="4"/><rect x="10" y="813" width="4" height="1"/><rect x="17" y="813" width="4" height="1"/><rect x="24" y="813" width="4" height="1"/><rect x="31" y="813" width="4" height="1"/><rect x="33" y="811" width="1" height="4"/><rect x="38" y="813" width="4" height="1"/><rect x="40" y="811" width="1" height="4"/><rect x="45" y="813" width="4" height="1"/><rect x="47" y="811" width="1" height="4"/><rect x="52" y="813" width="4" height="1"/><rect x="59" y="813" width="4" height="1"/><rect x="66" y="813" width="4" height="1"/><rect x="73" y="813" width="4" height="1"/><rect x="80" y="813" width="4" height="1"/><rect x="87" y="813" width="4" height="1"/><rect x="89" y="811" width="1" height="4"/><rect x="94" y="813" width="4" height="1"/><rect x="96" y="811" width="1" height="4"/><rect x="101" y="813" width="4" height="1"/><rect x="103" y="811" width="1" height="4"/><rect x="108" y="813" width="4" height="1"/><rect x="110" y="811" width="1" height="4"/><rect x="115" y="813" width="4" height="1"/><rect x="122" y="813" width="4" height="1"/><rect x="124" y="811" width="1" height="4"/><rect x="129" y="813" width="4" height="1"/><rect x="136" y="813" width="4" height="1"/><rect x="138" y="811" width="1" height="4"/><rect x="143" y="813" width="4" height="1"/><rect x="145" y="811" width="1" height="4"/><rect x="150" y="813" width="4" height="1"/><rect x="152" y="811" width="1" height="4"/><rect x="157" y="813" width="4" height="1"/><rect x="164" y="813" width="4" height="1"/><rect x="171" y="813" width="4" height="1"/><rect x="173" y="811" width="1" height="4"/><rect x="178" y="813" width="4" height="1"/><rect x="185" y="813" width="4" height="1"/><rect x="192" y="813" width="4" height="1"/><rect x="199" y="813" width="4" height="1"/><rect x="206" y="813" width="4" height="1"/><rect x="213" y="813" width="4" height="1"/><rect x="220" y="813" width="4" height="1"/><rect x="222" y="811" width="1" height="4"/><rect x="227" y="813" width="4" height="1"/><rect x="229" y="811" width="1" height="4"/><rect x="234" y="813" width="4" height="1"/><rect x="236" y="811" width="1" height="4"/><rect x="241" y="813" width="4" height="1"/><rect x="248" y="813" width="4" height="1"/><rect x="255" y="813" width="4" height="1"/><rect x="262" y="813" width="4" height="1"/><rect x="269" y="813" width="4" height="1"/><rect x="271" y="811" width="1" height="4"/><rect x="276" y="813" width="4" height="1"/><rect x="278" y="811" width="1" height="4"/><rect x="283" y="813" width="4" height="1"/><rect x="285" y="811" width="1" height="4"/><rect x="290" y="813" width="4" height="1"/><rect x="292" y="811" width="1" height="4"/><rect x="297" y="813" width="4" height="1"/><rect x="299" y="811" width="1" height="4"/><rect x="304" y="813" width="4" height="1"/><rect x="306" y="811" width="1" height="4"/><rect x="311" y="813" width="4" height="1"/><rect x="318" y="813" width="4" height="1"/><rect x="320" y="811" width="1" height="4"/><rect x="325" y="813" width="4" height="1"/><rect x="327" y="811" width="1" height="4"/><rect x="332" y="813" width="4" height="1"/><rect x="339" y="813" width="4" height="1"/><rect x="346" y="813" width="4" height="1"/><rect x="353" y="813" width="4" height="1"/><rect x="360" y="813" width="4" height="1"/><rect x="367" y="813" width="4" height="1"/><rect x="374" y="813" width="4" height="1"/><rect x="381" y="813" width="4" height="1"/><rect x="388" y="813" width="4" height="1"/><rect x="390" y="811" width="1" height="4"/><rect x="395" y="813" width="4" height="1"/><rect x="402" y="813" width="4" height="1"/><rect x="404" y="811" width="1" height="4"/><rect x="409" y="813" width="4" height="1"/><rect x="411" y="811" width="1" height="4"/><rect x="416" y="813" width="4" height="1"/><rect x="418" y="811" width="1" height="4"/><rect x="423" y="813" width="4" height="1"/><rect x="430" y="813" width="4" height="1"/><rect x="437" y="813" width="4" height="1"/><rect x="444" y="813" width="4" height="1"/><rect x="451" y="813" width="4" height="1"/><rect x="453" y="811" width="1" height="4"/><rect x="458" y="813" width="4" height="1"/><rect x="465" y="813" width="4" height="1"/><rect x="467" y="811" width="1" height="4"/><rect x="472" y="813" width="4" height="1"/><rect x="479" y="813" width="4" height="1"/><rect x="481" y="811" width="1" height="4"/><rect x="486" y="813" width="4" height="1"/><rect x="493" y="813" width="4" height="1"/><rect x="500" y="813" width="4" height="1"/><rect x="502" y="811" width="1" height="4"/><rect x="507" y="813" width="4" height="1"/><rect x="514" y="813" width="4" height="1"/><rect x="521" y="813" width="4" height="1"/><rect x="528" y="813" width="4" height="1"/><rect x="530" y="811" width="1" height="4"/><rect x="535" y="813" width="4" height="1"/><rect x="542" y="813" width="4" height="1"/><rect x="549" y="813" width="4" height="1"/><rect x="556" y="813" width="4" height="1"/><rect x="563" y="813" width="4" height="1"/><rect x="565" y="811" width="1" height="4"/><rect x="570" y="813" width="4" height="1"/><rect x="572" y="811" width="1" height="4"/><rect x="577" y="813" width="4" height="1"/><rect x="584" y="813" width="4" height="1"/><rect x="591" y="813" width="4" height="1"/><rect x="598" y="813" width="4" height="1"/><rect x="605" y="813" width="4" height="1"/><rect x="612" y="813" width="4" height="1"/><rect x="619" y="813" width="4" height="1"/><rect x="626" y="813" width="4" height="1"/><rect x="628" y="811" width="1" height="4"/><rect x="633" y="813" width="4" height="1"/><rect x="635" y="811" width="1" height="4"/><rect x="640" y="813" width="4" height="1"/><rect x="647" y="813" width="4" height="1"/><rect x="654" y="813" width="4" height="1"/><rect x="661" y="813" width="4" height="1"/><rect x="663" y="811" width="1" height="4"/><rect x="668" y="813" width="4" height="1"/><rect x="670" y="811" width="1" height="4"/><rect x="675" y="813" width="4" height="1"/><rect x="677" y="811" width="1" height="4"/><rect x="682" y="813" width="4" height="1"/><rect x="684" y="811" width="1" height="4"/><rect x="689" y="813" width="4" height="1"/><rect x="691" y="811" width="1" height="4"/><rect x="696" y="813" width="4" height="1"/><rect x="698" y="811" width="1" height="4"/><rect x="703" y="813" width="4" height="1"/><rect x="705" y="811" width="1" height="4"/><rect x="710" y="813" width="4" height="1"/><rect x="712" y="811" width="1" height="4"/><rect x="717" y="813" width="4" height="1"/><rect x="719" y="811" width="1" height="4"/><rect x="724" y="813" width="4" height="1"/><rect x="726" y="811" width="1" height="4"/><rect x="731" y="813" width="4" height="1"/><rect x="733" y="811" width="1" height="4"/><rect x="738" y="813" width="4" height="1"/><rect x="740" y="811" width="1" height="4"/><rect x="745" y="813" width="4" height="1"/><rect x="747" y="811" width="1" height="4"/><rect x="752" y="813" width="4" height="1"/><rect x="754" y="811" width="1" height="4"/><rect x="759" y="813" width="4" height="1"/><rect x="766" y="813" width="4" height="1"/><rect x="773" y="813" width="4" height="1"/><rect x="780" y="813" width="4" height="1"/><rect x="782" y="811" width="1" height="4"/><rect x="787" y="813" width="4" height="1"/><rect x="789" y="811" width="1" height="4"/><rect x="794" y="813" width="4" height="1"/><rect x="796" y="811" width="1" height="4"/><rect x="801" y="813" width="4" height="1"/><rect x="808" y="813" width="4" height="1"/><rect x="815" y="813" width="4" height="1"/><rect x="822" y="813" width="4" height="1"/><rect x="829" y="813" width="4" height="1"/><rect x="836" y="813" width="4" height="1"/><rect x="843" y="813" width="4" height="1"/><rect x="850" y="813" width="4" height="1"/><rect x="857" y="813" width="4" height="1"/><rect x="864" y="813" width="4" height="1"/><rect x="871" y="813" width="4" height="1"/><rect x="873" y="811" width="1" height="4"/><rect x="878" y="813" width="4" height="1"/><rect x="880" y="811" width="1" height="4"/><rect x="885" y="813" width="4" height="1"/><rect x="887" y="811" width="1" height="4"/><rect x="892" y="813" width="4" height="1"/><rect x="894" y="811" width="1" height="4"/><rect x="899" y="813" width="4" height="1"/><rect x="901" y="811" width="1" height="4"/></g>
<polyline fill="none" stroke="#ff8c00" stroke-width="1" points="-2,772.7 5,772.7 12,801 19,827.7 26,802.7 33,783.5 40,778.5 47,777.3 54,797.7 61,824 68,851 75,821.8 82,841 89,804 96,778.5 103,765 110,770 117,801.8 124,786 131,825 138,794 145,775 152,775 159,801 166,827.7 173,805 180,842 187,847 194,856 201,821 208,842 215,801 222,775 229,760 236,779 243,801 250,824 257,851 264,849 271,819 278,796 285,778 292,778 299,802 306,784 313,825 320,797.7 327,778 334,812 341,843.5 348,847 355,849 362,825 369,836 376,801 383,841 390,794 397,839 404,794 411,779 418,770 425,797.7 432,824 439,851 446,850 453,825 460,839 467,801 474,839 481,794.3 488,832.7 495,851 502,819 509,784.7 516,819 523,846 530,804 537,842.7 544,847.7 551,854 558,851 565,826 572,795.7 579,824 586,843.5 593,846.8 600,849.7 607,846 614,847 621,847 628,824 635,795.7 642,819 649,841.8 656,847.7 663,826 670,802.7 677,779.3 684,802.7 691,829.3 698,811 705,784 712,770 719,770 726,775 733,775 740,801 747,786 754,822.7 761,852.7 768,854.3 775,826 782,801 789,779.3 796,775 803,794.3 810,826 817,851 824,849.3 831,823.5 838,837.7 845,849.3 852,854.3 859,850.7 866,832.7 873,796 880,777 887,776 894,801.8 901,785.7"/>
<polyline fill="none" stroke="#000" stroke-width="2.35" stroke-linejoin="miter" stroke-miterlimit="12" points="-2,772 5,756 12,787.7 19,819.3 26,787.7 33,773.5 40,763.5 47,759.3 54,786 61,803.5 68,824.3 75,800.2 82,831 89,806 96,787.7 103,770 110,765 117,791 124,778.5 131,801 138,783.5 145,770 152,772 159,789 166,806 173,787.7 180,814 187,836.8 194,861 201,829.3 208,852.7 215,824.3 222,804.3 229,790 236,779.3 243,799.3 250,815 257,832.7 264,846.8 271,819.3 278,801 285,787.7 292,778.5 299,799.3 306,780 313,807.7 320,791 327,778.5 334,797.7 341,814.3 348,831 355,847.7 362,829.3 369,856.8 376,827.7 383,847.7 390,820 397,843.5 404,816 411,797 418,779.3 425,797.7 432,817.7 439,839.3 446,856 453,827.7 460,849.3 467,822.7 474,846 481,819.3 488,839.3 495,855 502,827.7 509,808.5 516,830 523,852.7 530,814.3 537,847.7 544,865 551,872 558,866 565,844 572,825 579,841.8 586,849.3 593,854.3 600,858.5 607,862.7 614,861.5 621,860.7 628,844.3 635,828.5 642,837.7 649,844.3 656,848.5 663,832.7 670,820 677,801.8 684,819.3 691,838.5 698,804.3 705,778.5 712,765 719,770 726,775 733,772 740,783.5 747,778.5 754,794.3 761,806.8 768,821 775,806.8 782,794.3 789,781 796,774 803,801 810,822.7 817,841 824,854.3 831,825.2 838,845.2 845,855.2 852,861 859,861 866,841.8 873,827.7 880,815.2 887,800.2 894,815.2 901,789.3"/>
</svg>
<div class="win" style="left:92px;top:38px;width:953px;height:741px;"></div>
<div class="" style="left:96px;top:42px;width:945px;height:18px;background:linear-gradient(to right,#808080,#c0c0c0)"></div>
<svg style="position:absolute;left:98px;top:43px" width="16" height="16" viewBox="0 0 16 16"><defs><linearGradient id="ig" x1="0" y1="0" x2="1" y2="1"><stop offset="0.25" stop-color="#f4f4f4"/><stop offset="0.75" stop-color="#a8a8a8"/></linearGradient></defs><path d="M7.9 0.6 Q10.3 5.4 15.2 7.8 Q10.3 10.2 7.9 15 Q5.5 10.2 0.6 7.8 Q5.5 5.4 7.9 0.6 Z" fill="url(#ig)"/><circle cx="7.9" cy="7.8" r="2.4" fill="#767676"/><circle cx="7.9" cy="7.8" r="2.4" fill="none" stroke="#9a9a9a" stroke-width="0.7"/></svg>
<div class="t tb" style="left:116px;top:45px;color:#d4d0c8;line-height:14px;height:14px">Control Center - TF FINWIN</div>
<div class="btn" style="left:989px;top:44px;width:16px;height:14px;"><div style="left:4px;top:9px;width:6px;height:2px;background:#000"></div></div>
<div class="btn" style="left:1005px;top:44px;width:16px;height:14px;"><div style="left:3px;top:2px;width:9px;height:9px;border:1px solid #000;border-top-width:2px"></div></div>
<div class="btn" style="left:1023px;top:44px;width:16px;height:14px;"><svg style="position:absolute;left:4px;top:3px" width="8" height="7" viewBox="0 0 8 7" shape-rendering="crispEdges"><path d="M0 0h2v1h1v1h2v-1h1v-1h2v1h-1v1h-1v1h-1v1h1v1h1v1h1v1h-2v-1h-1v-1h-2v1h-1v1h-2v-1h1v-1h1v-1h1v-1h-1v-1h-1v-1h-1z" fill="#000"/></svg></div>
<div class="" style="left:96px;top:60px;width:945px;height:25px;background:linear-gradient(to right,#d4d0c8,#f6f5f3)"></div>
<div class="menu" style="left:111px;top:66px;">File</div>
<div class="menu" style="left:146px;top:66px;">Tools</div>
<div class="menu" style="left:190px;top:66px;">Help</div>
<div class="menu" style="left:231px;top:66px;">[+/-]</div>
<div class="" style="left:96px;top:85px;width:945px;height:669px;background:#d4d0c8;box-shadow:inset -1px -1px 0 #fff,inset 1px 1px 0 #808080,inset -2px -2px 0 #fff,inset 2px 2px 0 #404040;border-bottom:1px solid #fff"></div>
<div class="" style="left:98px;top:107px;width:941px;height:644px;background:#d4d0c8;box-shadow:inset -1px -1px 0 #404040,inset 1px 1px 0 #fff,inset -2px -2px 0 #808080"></div>
<div class="tab" style="left:143px;top:89px;width:59px;height:18px;box-shadow:inset 1px 1px 0 #fff,inset -1px 0 0 #404040,inset -2px 0 0 #808080"><div class="t" style="left:5px;top:4px;letter-spacing:-0.25px">Strategies</div></div>
<div class="tab" style="left:202px;top:89px;width:64px;height:18px;box-shadow:inset 1px 1px 0 #fff,inset -1px 0 0 #404040,inset -2px 0 0 #808080"><div class="t" style="left:6px;top:4px;letter-spacing:-0.25px">Executions</div></div>
<div class="tab" style="left:266px;top:89px;width:54px;height:18px;box-shadow:inset 1px 1px 0 #fff,inset -1px 0 0 #404040,inset -2px 0 0 #808080"><div class="t" style="left:6px;top:4px;letter-spacing:-0.25px">Positions</div></div>
<div class="tab" style="left:320px;top:89px;width:57px;height:18px;box-shadow:inset 1px 1px 0 #fff,inset -1px 0 0 #404040,inset -2px 0 0 #808080"><div class="t" style="left:5px;top:4px;letter-spacing:0px">Accounts</div></div>
<div class="tab" style="left:377px;top:89px;width:115px;height:18px;box-shadow:inset 1px 1px 0 #fff,inset -1px 0 0 #404040,inset -2px 0 0 #808080"><div class="t" style="left:6px;top:4px;letter-spacing:0px">Account Perfomance</div></div>
<div class="tab" style="left:492px;top:89px;width:42px;height:18px;box-shadow:inset 1px 1px 0 #fff,inset -1px 0 0 #404040,inset -2px 0 0 #808080"><div class="t" style="left:6px;top:4px;letter-spacing:-0.25px">Log</div></div>
<div class="tab" style="left:98px;top:87px;width:47px;height:21px;box-shadow:inset 1px 1px 0 #fff,inset -1px 0 0 #404040,inset -2px 0 0 #808080;border-radius:2px 2px 0 0"><div class="t" style="left:7px;top:4px;letter-spacing:-0.45px">Orders</div></div>
<div class="sunk" style="left:102px;top:109px;width:168px;height:104px;background:#fff"></div>
<div class="" style="left:104px;top:111px;width:164px;height:24px;background:#c0c0c0"></div>
<div class="" style="left:104px;top:167px;width:164px;height:24px;background:#c0c0c0"></div>
<div class="t" style="left:104px;top:117px;width:60px;text-align:center">Bid</div>
<div class="t" style="left:152px;top:117px;width:60px;text-align:center">Ask</div>
<div class="t" style="left:208px;top:117px;width:60px;text-align:center">Last</div>
<div class="t" style="left:104px;top:173px;width:60px;text-align:center">Open</div>
<div class="t" style="left:151px;top:173px;width:60px;text-align:center">High</div>
<div class="t" style="left:208px;top:173px;width:60px;text-align:center">Low</div>
<div class="t" style="left:112px;top:137px;width:40px;text-align:center">n/a</div>
<div class="t" style="left:168px;top:137px;width:40px;text-align:center">n/a</div>
<div class="t" style="left:224px;top:137px;width:40px;text-align:center">n/a</div>
<div class="t" style="left:112px;top:153px;width:40px;text-align:center">n/a</div>
<div class="t" style="left:168px;top:153px;width:40px;text-align:center">n/a</div>
<div class="t" style="left:224px;top:153px;width:40px;text-align:center">n/a</div>
<div class="t" style="left:112px;top:195px;width:40px;text-align:center">n/a</div>
<div class="t" style="left:168px;top:195px;width:40px;text-align:center">n/a</div>
<div class="t" style="left:224px;top:195px;width:40px;text-align:center">n/a</div>
<div class="sunk" style="left:270px;top:109px;width:765px;height:104px;background:#d4d0c8"></div>
<div class="t" style="left:282px;top:141px;letter-spacing:0.25px">Type:</div>
<div class="t" style="left:282px;top:165px;">Name:</div>
<div class="sunk" style="left:348px;top:133px;width:148px;height:21px;background:#fff"><div class="t" style="left:4px;top:5px">&lt;Default&gt;</div><div class="btn" style="left:130px;top:2px;width:16px;height:17px"><div class="arr" style="left:5px;top:6px"><svg width="7" height="4" viewBox="0 0 7 4" shape-rendering="crispEdges"><path d="M0 0h7v1h-1v1h-1v1h-1v1h-1v-1h-1v-1h-1v-1h-1z" fill="#000"/></svg></div></div></div>
<div class="sunk" style="left:348px;top:157px;width:148px;height:21px;background:#fff"><div class="t" style="left:4px;top:5px">TF 03-10</div><div class="btn" style="left:130px;top:2px;width:16px;height:17px"><div class="arr" style="left:5px;top:6px"><svg width="7" height="4" viewBox="0 0 7 4" shape-rendering="crispEdges"><path d="M0 0h7v1h-1v1h-1v1h-1v1h-1v-1h-1v-1h-1v-1h-1z" fill="#000"/></svg></div></div></div>
<div class="t" style="left:506px;top:115px;letter-spacing:0.1px">Order Type:</div>
<div class="sunk" style="left:504px;top:133px;width:88px;height:21px;background:#fff"><div class="t" style="left:4px;top:5px">Limit</div><div class="btn" style="left:70px;top:2px;width:16px;height:17px"><div class="arr" style="left:5px;top:6px"><svg width="7" height="4" viewBox="0 0 7 4" shape-rendering="crispEdges"><path d="M0 0h7v1h-1v1h-1v1h-1v1h-1v-1h-1v-1h-1v-1h-1z" fill="#000"/></svg></div></div></div>
<div class="t" style="left:602px;top:115px;letter-spacing:0.2px">Qty:</div>
<div class="sunk" style="left:600px;top:134px;width:70px;height:20px;background:#fff"><div class="t" style="left:4px;top:4px;color:#000">1</div><div class="btn" style="left:52px;top:2px;width:16px;height:8px"><div class="arr" style="left:7px;top:3px"><svg width="3" height="2" viewBox="0 0 3 2" shape-rendering="crispEdges"><path d="M1 0h1v1h1v1h-3v-1h1z" fill="#000"/></svg></div></div><div class="btn" style="left:52px;top:10px;width:16px;height:8px"><div class="arr" style="left:7px;top:3px"><svg width="3" height="2" viewBox="0 0 3 2" shape-rendering="crispEdges"><path d="M0 0h3v1h-1v1h-1v-1h-1z" fill="#000"/></svg></div></div></div>
<div class="t" style="left:678px;top:115px;letter-spacing:0.1px">Limit Price:</div>
<div class="sunk" style="left:676px;top:134px;width:79px;height:20px;background:#fff"><div class="t" style="left:4px;top:4px;color:#000">0</div><div class="btn" style="left:61px;top:2px;width:16px;height:8px"><div class="arr" style="left:7px;top:3px"><svg width="3" height="2" viewBox="0 0 3 2" shape-rendering="crispEdges"><path d="M1 0h1v1h1v1h-3v-1h1z" fill="#000"/></svg></div></div><div class="btn" style="left:61px;top:10px;width:16px;height:8px"><div class="arr" style="left:7px;top:3px"><svg width="3" height="2" viewBox="0 0 3 2" shape-rendering="crispEdges"><path d="M0 0h3v1h-1v1h-1v-1h-1z" fill="#000"/></svg></div></div></div>
<div class="t" style="left:766px;top:115px;color:#707070;letter-spacing:0.05px">Stop Price:</div>
<div class="sunk" style="left:764px;top:134px;width:80px;height:20px;background:#d4d0c8"><div class="t" style="left:4px;top:4px;color:#808080">0</div><div class="btn" style="left:62px;top:2px;width:16px;height:8px"><div class="arr" style="left:7px;top:3px"><svg width="3" height="2" viewBox="0 0 3 2" shape-rendering="crispEdges"><path d="M1 0h1v1h1v1h-3v-1h1z" fill="#808080"/></svg></div></div><div class="btn" style="left:62px;top:10px;width:16px;height:8px"><div class="arr" style="left:7px;top:3px"><svg width="3" height="2" viewBox="0 0 3 2" shape-rendering="crispEdges"><path d="M0 0h3v1h-1v1h-1v-1h-1z" fill="#808080"/></svg></div></div></div>
<div class="t" style="left:854px;top:115px;letter-spacing:0.3px">TIF:</div>
<div class="sunk" style="left:852px;top:133px;width:72px;height:21px;background:#fff"><div class="t" style="left:4px;top:5px"></div><div class="btn" style="left:54px;top:2px;width:16px;height:17px"><div class="arr" style="left:5px;top:6px"><svg width="7" height="4" viewBox="0 0 7 4" shape-rendering="crispEdges"><path d="M0 0h7v1h-1v1h-1v1h-1v1h-1v-1h-1v-1h-1v-1h-1z" fill="#000"/></svg></div></div></div>
<div class="t" style="left:934px;top:115px;letter-spacing:0.25px">OCO:</div>
<div class="sunk" style="left:932px;top:134px;width:56px;height:20px;background:#fff"></div>
<div class="t" style="left:998px;top:115px;width:35px;overflow:hidden;letter-spacing:0.3px">Account:</div>
<div class="" style="left:996px;top:133px;width:37px;height:21px;background:#fff;box-shadow:inset 1px 1px 0 #808080,inset 0 -1px 0 #fff,inset 2px 2px 0 #404040,inset 0 -2px 0 #d4d0c8"></div>
<div class="" style="left:542px;top:176px;width:88px;height:27px;background:#f5fff5;box-shadow:inset -1px -1px 0 #000,inset 1px 1px 0 #fff,inset -2px -2px 0 #00a000;text-align:center;line-height:26px">Buy</div>
<div class="" style="left:714px;top:176px;width:88px;height:27px;background:#fff0f5;box-shadow:inset -1px -1px 0 #000,inset 1px 1px 0 #fff,inset -2px -2px 0 #b0003a;text-align:center;line-height:26px">Sell</div>
<div class="" style="left:102px;top:213px;width:933px;height:534px;background:#808080;box-shadow:inset 1px 1px 0 #808080,inset 2px 2px 0 #404040,inset -1px -1px 0 #fff,inset -2px -2px 0 #fff"></div>
<div class="hdr" style="left:104px;top:215px;width:40px;height:22px;">Instru</div>
<div class="hdr" style="left:144px;top:215px;width:40px;height:22px;">Actio</div>
<div class="hdr" style="left:184px;top:215px;width:40px;height:22px;">Order</div>
<div class="hdr" style="left:224px;top:215px;width:40px;height:22px;">Qty</div>
<div class="hdr" style="left:264px;top:215px;width:40px;height:22px;">Limit</div>
<div class="hdr" style="left:304px;top:215px;width:40px;height:22px;">Stop</div>
<div class="hdr" style="left:344px;top:215px;width:40px;height:22px;">State</div>
<div class="hdr" style="left:384px;top:215px;width:40px;height:22px;">Filled</div>
<div class="hdr" style="left:424px;top:215px;width:40px;height:22px;">Avg</div>
<div class="hdr" style="left:464px;top:215px;width:40px;height:22px;">Rem</div>
<div class="hdr" style="left:504px;top:215px;width:40px;height:22px;">Nam</div>
<div class="hdr" style="left:544px;top:215px;width:40px;height:22px;">OCO</div>
<div class="hdr" style="left:584px;top:215px;width:40px;height:22px;">TIF</div>
<div class="hdr" style="left:624px;top:215px;width:40px;height:22px;">GTD</div>
<div class="hdr" style="left:664px;top:215px;width:40px;height:22px;">Acco</div>
<div class="hdr" style="left:704px;top:215px;width:40px;height:22px;">Conn</div>
<div class="hdr" style="left:744px;top:215px;width:40px;height:22px;">ID</div>
<div class="hdr" style="left:784px;top:215px;width:40px;height:22px;">Strat</div>
<div class="hdr" style="left:824px;top:215px;width:40px;height:22px;">Toke</div>
<div class="hdr" style="left:864px;top:215px;width:40px;height:22px;">Time</div>
<div class="hdr" style="left:904px;top:215px;width:40px;height:22px;">Incre</div>
<div class="hdr" style="left:944px;top:215px;width:40px;height:22px;">Decr</div>
<div class="hdr" style="left:984px;top:215px;width:49px;height:22px;">Cancel</div>
<div class="face" style="left:96px;top:754px;width:945px;height:23px;"></div>
<div class="" style="left:97px;top:756px;width:901px;height:16px;box-shadow:inset 1px 1px 0 #808080,inset 2px 2px 0 #404040,inset -1px -1px 0 #fff"></div>
<div class="" style="left:999px;top:756px;width:28px;height:17px;background:#90ee90;box-shadow:inset 1px 1px 0 #808080,inset 2px 2px 0 #404040,inset -1px -1px 0 #90ee90,inset -2px -2px 0 #fff"><div class="t" style="left:6px;top:2px;letter-spacing:0.3px">ATI</div></div>
<div class="" style="left:1036px;top:762px;width:2px;height:2px;background:#808080;box-shadow:1px 1px 0 #fff"></div>
<div class="" style="left:1032px;top:766px;width:2px;height:2px;background:#808080;box-shadow:1px 1px 0 #fff"></div>
<div class="" style="left:1036px;top:766px;width:2px;height:2px;background:#808080;box-shadow:1px 1px 0 #fff"></div>
<div class="" style="left:1028px;top:770px;width:2px;height:2px;background:#808080;box-shadow:1px 1px 0 #fff"></div>
<div class="" style="left:1032px;top:770px;width:2px;height:2px;background:#808080;box-shadow:1px 1px 0 #fff"></div>
<div class="" style="left:1036px;top:770px;width:2px;height:2px;background:#808080;box-shadow:1px 1px 0 #fff"></div>
<div class="win" style="left:321px;top:251px;width:543px;height:337px;"></div>
<div class="" style="left:324px;top:254px;width:537px;height:15px;background:linear-gradient(to right,#0a246a,#a6caf0)"></div>
<div class="t tb" style="left:326px;top:256px;color:#fff">Format Data Series</div>
<div class="btn" style="left:849px;top:256px;width:10px;height:11px;"><svg style="position:absolute;left:0;top:0" width="10" height="11" viewBox="0 0 10 11"><path d="M2.3 2.3L6.9 6.9M6.9 2.3L2.3 6.9" stroke="#000" stroke-width="1.25"/></svg></div>
<div class="grp" style="left:335px;top:286px;width:225px;height:107px;"><div class="lg" style="left:7px;top:-5px">Instrument</div></div>
<div class="t" style="left:352px;top:324px;letter-spacing:0.25px">Type:</div>
<div class="t" style="left:352px;top:347px;">Name:</div>
<div class="sunk" style="left:412px;top:317px;width:135px;height:21px;background:#fff"><div class="t" style="left:4px;top:5px">&lt;Default&gt;</div><div class="btn" style="left:117px;top:2px;width:16px;height:17px"><div class="arr" style="left:5px;top:6px"><svg width="7" height="4" viewBox="0 0 7 4" shape-rendering="crispEdges"><path d="M0 0h7v1h-1v1h-1v1h-1v1h-1v-1h-1v-1h-1v-1h-1z" fill="#000"/></svg></div></div></div>
<div class="sunk" style="left:412px;top:340px;width:135px;height:21px;background:#fff"><div class="t" style="left:4px;top:5px">TF 03-10</div><div class="btn" style="left:117px;top:2px;width:16px;height:17px"><div class="arr" style="left:5px;top:6px"><svg width="7" height="4" viewBox="0 0 7 4" shape-rendering="crispEdges"><path d="M0 0h7v1h-1v1h-1v1h-1v1h-1v-1h-1v-1h-1v-1h-1z" fill="#000"/></svg></div></div></div>
<div class="grp" style="left:335px;top:402px;width:225px;height:50px;"><div class="lg" style="left:7px;top:-5px">Interval Settings</div></div>
<div class="sunk" style="left:350px;top:418px;width:73px;height:20px;background:#fff"><div class="t" style="right:20px;top:5px;color:#000">3</div><div class="btn" style="left:55px;top:2px;width:16px;height:8px"><div class="arr" style="left:7px;top:3px"><svg width="3" height="2" viewBox="0 0 3 2" shape-rendering="crispEdges"><path d="M1 0h1v1h1v1h-3v-1h1z" fill="#000"/></svg></div></div><div class="btn" style="left:55px;top:10px;width:16px;height:8px"><div class="arr" style="left:7px;top:3px"><svg width="3" height="2" viewBox="0 0 3 2" shape-rendering="crispEdges"><path d="M0 0h3v1h-1v1h-1v-1h-1z" fill="#000"/></svg></div></div></div>
<div class="sunk" style="left:432px;top:416px;width:73px;height:21px;background:#fff"><div class="t" style="left:4px;top:5px">Renko</div><div class="btn" style="left:55px;top:2px;width:16px;height:17px"><div class="arr" style="left:5px;top:6px"><svg width="7" height="4" viewBox="0 0 7 4" shape-rendering="crispEdges"><path d="M0 0h7v1h-1v1h-1v1h-1v1h-1v-1h-1v-1h-1v-1h-1z" fill="#000"/></svg></div></div></div>
<div class="t" style="left:512px;top:425px;">bars</div>
<div class="grp" style="left:335px;top:460px;width:225px;height:49px;"><div class="lg" style="left:7px;top:-5px">Chart Template</div></div>
<div class="sunk" style="left:350px;top:476px;width:90px;height:21px;background:#fff"><div class="t" style="left:4px;top:5px">RB</div></div>
<div class="grp" style="left:567px;top:286px;width:234px;height:223px;"><div class="lg" style="left:7px;top:-5px">Range Settings</div></div>
<svg style="position:absolute;left:574px;top:324px" width="12" height="12" viewBox="0 0 12 12"><circle cx="6" cy="6" r="4.5" fill="#fff"/><path d="M2.11 9.89A5.5 5.5 0 0 1 9.89 2.11" stroke="#808080" fill="none"/><path d="M9.89 2.11A5.5 5.5 0 0 1 2.11 9.89" stroke="#fff" fill="none"/><path d="M2.82 9.18A4.5 4.5 0 0 1 9.18 2.82" stroke="#404040" fill="none"/><path d="M9.18 2.82A4.5 4.5 0 0 1 2.82 9.18" stroke="#d4d0c8" fill="none"/></svg>
<div class="t" style="left:591px;top:324px;letter-spacing:0.05px">Days back</div>
<svg style="position:absolute;left:574px;top:358px" width="12" height="12" viewBox="0 0 12 12"><circle cx="6" cy="6" r="4.5" fill="#fff"/><path d="M2.11 9.89A5.5 5.5 0 0 1 9.89 2.11" stroke="#808080" fill="none"/><path d="M9.89 2.11A5.5 5.5 0 0 1 2.11 9.89" stroke="#fff" fill="none"/><path d="M2.82 9.18A4.5 4.5 0 0 1 9.18 2.82" stroke="#404040" fill="none"/><path d="M9.18 2.82A4.5 4.5 0 0 1 2.82 9.18" stroke="#d4d0c8" fill="none"/></svg>
<div class="t" style="left:591px;top:358px;letter-spacing:0.05px">Bars back</div>
<svg style="position:absolute;left:574px;top:392px" width="12" height="12" viewBox="0 0 12 12"><circle cx="6" cy="6" r="4.5" fill="#fff"/><path d="M2.11 9.89A5.5 5.5 0 0 1 9.89 2.11" stroke="#808080" fill="none"/><path d="M9.89 2.11A5.5 5.5 0 0 1 2.11 9.89" stroke="#fff" fill="none"/><path d="M2.82 9.18A4.5 4.5 0 0 1 9.18 2.82" stroke="#404040" fill="none"/><path d="M9.18 2.82A4.5 4.5 0 0 1 2.82 9.18" stroke="#d4d0c8" fill="none"/><circle cx="6" cy="6" r="1.9" fill="#000"/></svg>
<div class="t" style="left:591px;top:392px;letter-spacing:0.05px">Start date</div>
<div class="t" style="left:594px;top:427px;letter-spacing:0px">Last date</div>
<div class="sunk" style="left:670px;top:320px;width:117px;height:20px;background:#d4d0c8"><div class="t" style="left:4px;top:4px;color:#808080">3</div><div class="btn" style="left:99px;top:2px;width:16px;height:8px"><div class="arr" style="left:7px;top:3px"><svg width="3" height="2" viewBox="0 0 3 2" shape-rendering="crispEdges"><path d="M1 0h1v1h1v1h-3v-1h1z" fill="#808080"/></svg></div></div><div class="btn" style="left:99px;top:10px;width:16px;height:8px"><div class="arr" style="left:7px;top:3px"><svg width="3" height="2" viewBox="0 0 3 2" shape-rendering="crispEdges"><path d="M0 0h3v1h-1v1h-1v-1h-1z" fill="#808080"/></svg></div></div></div>
<div class="sunk" style="left:670px;top:354px;width:117px;height:20px;background:#d4d0c8"><div class="t" style="left:4px;top:4px;color:#808080">500</div><div class="btn" style="left:99px;top:2px;width:16px;height:8px"><div class="arr" style="left:7px;top:3px"><svg width="3" height="2" viewBox="0 0 3 2" shape-rendering="crispEdges"><path d="M1 0h1v1h1v1h-3v-1h1z" fill="#808080"/></svg></div></div><div class="btn" style="left:99px;top:10px;width:16px;height:8px"><div class="arr" style="left:7px;top:3px"><svg width="3" height="2" viewBox="0 0 3 2" shape-rendering="crispEdges"><path d="M0 0h3v1h-1v1h-1v-1h-1z" fill="#808080"/></svg></div></div></div>
<div class="sunk" style="left:670px;top:388px;width:117px;height:20px;background:#fff"><div class="t" style="left:3px;top:4px">10.12.2009</div><div class="btn" style="left:99px;top:2px;width:16px;height:16px"><div class="arr" style="left:5px;top:6px"><svg width="7" height="4" viewBox="0 0 7 4" shape-rendering="crispEdges"><path d="M0 0h7v1h-1v1h-1v1h-1v1h-1v-1h-1v-1h-1v-1h-1z" fill="#000"/></svg></div></div></div>
<div class="sunk" style="left:670px;top:422px;width:117px;height:20px;background:#fff"><div class="t" style="left:3px;top:4px">&nbsp;4. &nbsp;3.2010</div><div class="btn" style="left:99px;top:2px;width:16px;height:16px"><div class="arr" style="left:5px;top:6px"><svg width="7" height="4" viewBox="0 0 7 4" shape-rendering="crispEdges"><path d="M0 0h7v1h-1v1h-1v1h-1v1h-1v-1h-1v-1h-1v-1h-1z" fill="#000"/></svg></div></div></div>
<div class="" style="left:446px;top:550px;width:73px;height:21px;background:#000"></div>
<div class="btn" style="left:447px;top:551px;width:71px;height:19px;"></div>
<div class="btn" style="left:629px;top:550px;width:73px;height:21px;text-align:center;line-height:22px;letter-spacing:-0.25px">Cancel</div>
<div class="" style="left:432px;top:437px;width:73px;height:132px;background:#fff;border:1px solid #000"></div>
<div class="t" style="left:435px;top:439px;">Tick</div>
<div class="t" style="left:435px;top:452px;">Volume</div>
<div class="t" style="left:435px;top:465px;">Range</div>
<div class="t" style="left:435px;top:478px;">Second</div>
<div class="t" style="left:435px;top:491px;">Minute</div>
<div class="t" style="left:435px;top:504px;">Day</div>
<div class="t" style="left:435px;top:517px;">Week</div>
<div class="t" style="left:435px;top:530px;">Month</div>
<div class="t" style="left:435px;top:543px;">Year</div>
<div class="" style="left:433px;top:555px;width:71px;height:13px;background:#0a246a"></div>
<div class="t" style="left:435px;top:556px;color:#fff">Renko</div>
</body></html>
